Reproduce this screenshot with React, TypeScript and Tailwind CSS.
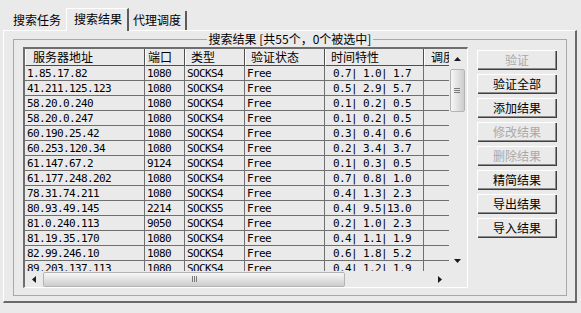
import React from "react";

type Row = [string, string, string, string, number[]];

const rows: Row[] = [
  ["1.85.17.82", "1080", "SOCKS4", "Free", [0.7, 1.0, 1.7]],
  ["41.211.125.123", "1080", "SOCKS4", "Free", [0.5, 2.9, 5.7]],
  ["58.20.0.240", "1080", "SOCKS4", "Free", [0.1, 0.2, 0.5]],
  ["58.20.0.247", "1080", "SOCKS4", "Free", [0.1, 0.2, 0.5]],
  ["60.190.25.42", "1080", "SOCKS4", "Free", [0.3, 0.4, 0.6]],
  ["60.253.120.34", "1080", "SOCKS4", "Free", [0.2, 3.4, 3.7]],
  ["61.147.67.2", "9124", "SOCKS4", "Free", [0.1, 0.3, 0.5]],
  ["61.177.248.202", "1080", "SOCKS4", "Free", [0.7, 0.8, 1.0]],
  ["78.31.74.211", "1080", "SOCKS4", "Free", [0.4, 1.3, 2.3]],
  ["80.93.49.145", "2214", "SOCKS5", "Free", [0.4, 9.5, 13.0]],
  ["81.0.240.113", "9050", "SOCKS4", "Free", [0.2, 1.0, 2.3]],
  ["81.19.35.170", "1080", "SOCKS4", "Free", [0.4, 1.1, 1.9]],
  ["82.99.246.10", "1080", "SOCKS4", "Free", [0.6, 1.8, 5.2]],
  ["89.203.137.113", "1080", "SOCKS4", "Free", [0.4, 1.2, 1.9]],
];

const headers = [
  { label: "服务器地址", w: "w-[120px]", pl: "pl-[7px]" },
  { label: "端口", w: "w-[40px]", pl: "pl-[2px]" },
  { label: "类型", w: "w-[60px]", pl: "pl-[5px]" },
  { label: "验证状态", w: "w-[80px]", pl: "pl-[5px]" },
  { label: "时间特性", w: "w-[99px]", pl: "pl-[5px]" },
  { label: "调度", w: "w-[60px]", pl: "pl-[6px]" },
];

const buttons = [
  { label: "验证", disabled: true },
  { label: "验证全部", disabled: false },
  { label: "添加结果", disabled: false },
  { label: "修改结果", disabled: true },
  { label: "删除结果", disabled: true },
  { label: "精简结果", disabled: false },
  { label: "导出结果", disabled: false },
  { label: "导入结果", disabled: false },
];

const cjk = "font-['Noto_Sans_CJK_SC',sans-serif] text-[12px]";
const mono = "font-['DejaVu_Sans_Mono',monospace] text-[11px] tracking-[-0.62px] whitespace-pre";

const fmt = (t: number[]) => t.map((v) => v.toFixed(1).padStart(4, " ")).join("|");

const Arrow = ({ dir }: { dir: "up" | "down" | "left" | "right" }) => {
  const pts = {
    up: "0,4 3.5,0 7,4",
    down: "0,0 7,0 3.5,4",
    left: "4,0 4,7 0,3.5",
    right: "0,0 0,7 4,3.5",
  }[dir];
  const vert = dir === "up" || dir === "down";
  return (
    <svg width={vert ? 7 : 4} height={vert ? 4 : 7} viewBox={vert ? "0 0 7 4" : "0 0 4 7"}>
      <polygon points={pts} fill="#1a1a1a" />
    </svg>
  );
};

const ListView = () => (
  <div className="w-[445px] h-[241px] mt-[1px] border-t-2 border-l-2 border-[#6e6e6e] border-b border-r border-b-white border-r-white flex flex-col">
    <div className="flex flex-1 min-h-0">
      {/* grid content */}
      <div className="w-[424px] overflow-hidden">
        <div className="flex h-[17px] w-max">
          {headers.map((h, i) => (
            <div
              key={i}
              className={`${h.w} ${h.pl} shrink-0 h-[17px] border-r border-b border-[#4f4f4f] border-l border-l-white ${cjk} leading-[16px] text-black`}
            >
              {h.label}
            </div>
          ))}
        </div>
        {rows.map((r, i) => (
          <div key={i} className={`flex h-[15px] w-max ${mono} leading-[15px] text-black`}>
            <div className="w-[120px] shrink-0 pl-[2px] border-r border-b border-[#6f6f6f]">{r[0]}</div>
            <div className="w-[40px] shrink-0 pl-[2px] border-r border-b border-[#6f6f6f]">{r[1]}</div>
            <div className="w-[60px] shrink-0 pl-[2px] border-r border-b border-[#6f6f6f]">{r[2]}</div>
            <div className="w-[80px] shrink-0 pl-[2px] border-r border-b border-[#6f6f6f]">{r[3]}</div>
            <div className="w-[99px] shrink-0 pl-[2px] border-r border-b border-[#6f6f6f]">{fmt(r[4])}</div>
            <div className="w-[60px] shrink-0 border-r border-b border-[#6f6f6f]"></div>
          </div>
        ))}
      </div>
      {/* vertical scrollbar */}
      <div className="w-[16px] flex flex-col items-center">
        <div className="h-[20px] flex items-center justify-center">
          <Arrow dir="up" />
        </div>
        <div className="w-[15px] h-[43px] rounded-[2px] border border-[#b4b4b4] bg-linear-to-r from-[#f7f7f7] to-[#cdcdcd] flex flex-col items-center justify-center gap-[1px]">
          <div className="w-[6px] h-px bg-[#7a7a7a]" />
          <div className="w-[6px] h-px bg-[#7a7a7a]" />
          <div className="w-[6px] h-px bg-[#7a7a7a]" />
        </div>
        <div className="flex-1" />
        <div className="h-[20px] flex items-center justify-center">
          <Arrow dir="down" />
        </div>
      </div>
    </div>
    {/* horizontal scrollbar */}
    <div className="h-[16px] flex">
      <div className="w-[424px] flex items-center">
        <div className="w-[18px] flex items-center justify-center">
          <Arrow dir="left" />
        </div>
        <div className="w-[302px] h-[15px] rounded-[2px] border border-[#b4b4b4] bg-linear-to-b from-[#f7f7f7] to-[#cdcdcd] flex items-center justify-center gap-[1px]">
          <div className="w-px h-[6px] bg-[#7a7a7a]" />
          <div className="w-px h-[6px] bg-[#7a7a7a]" />
          <div className="w-px h-[6px] bg-[#7a7a7a]" />
        </div>
        <div className="flex-1" />
        <div className="w-[18px] flex items-center justify-center">
          <Arrow dir="right" />
        </div>
      </div>
      <div className="w-[16px]" />
    </div>
  </div>
);

export default function App() {
  return (
    <div className="w-[581px] h-[313px] bg-[#ebeaeb] overflow-hidden">
      {/* tabs */}
      <div className="h-[30px] flex items-end pl-[5px]">
        <div className={`w-[61px] h-[19px] pl-[8px] pt-[1px] ${cjk} leading-[16px] text-black`}>搜索任务</div>
        <div
          className={`relative z-10 -mb-px w-[63px] h-[23px] pl-[7px] pt-[2px] bg-[#ebeaeb] border-l border-t border-white border-r-2 border-r-[#5c5c5c] ${cjk} leading-[16px] text-black`}
        >
          搜索结果
        </div>
        <div className={`w-[58px] h-[19px] pl-[4px] pt-[1px] border-r-2 border-r-[#5c5c5c] ${cjk} leading-[16px] text-black`}>
          代理调度
        </div>
      </div>

      {/* tab panel */}
      <div className="ml-[3px] w-[574px] h-[273px] border-l border-t border-white border-r-2 border-b-2 border-r-[#6a6a6a] border-b-[#6a6a6a] pl-[9px] pt-px">
        <fieldset className="w-[554px] h-[264px] border border-[#a8a8a8] pl-[9px] pr-[9px]">
          <legend className={`mx-auto px-[2px] ${cjk} leading-[14px] text-black`}>搜索结果 [共55个，0个被选中]</legend>
          <div className="flex items-start gap-[9px]">
            <ListView />
            <div className="w-[80px] mt-[4px] flex flex-col gap-[4px]">
              {buttons.map((b, i) => (
                <div
                  key={i}
                  className={`h-[20px] flex items-center justify-center ${cjk} leading-[14px] shadow-[inset_1px_1px_#ffffff,inset_-1px_-1px_#404040,inset_-2px_-2px_#8c8c8c] ${
                    b.disabled ? "text-[#a9a9a9]" : "text-black"
                  }`}
                >
                  {b.label}
                </div>
              ))}
            </div>
          </div>
        </fieldset>
      </div>
    </div>
  );
}
